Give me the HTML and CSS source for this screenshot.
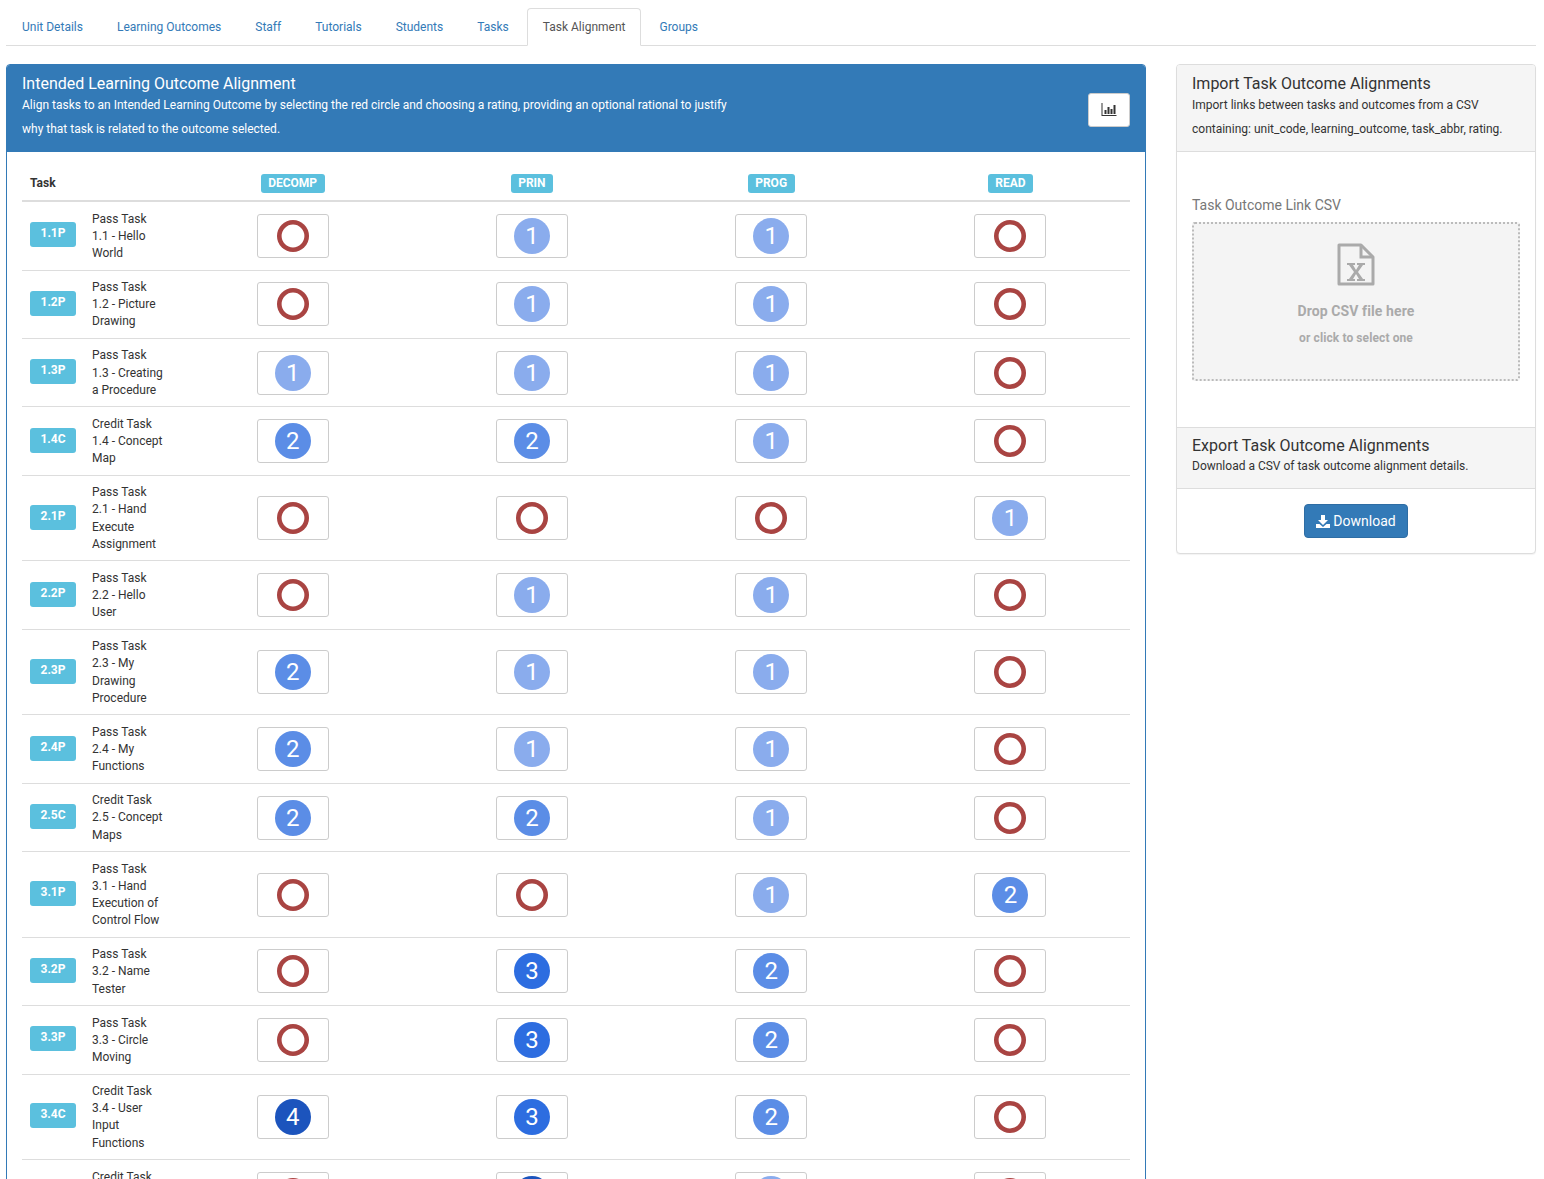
FILE: index.html
```html
<!DOCTYPE html>
<html lang="en">
<head>
  <meta charset="UTF-8">
  <title>Task Alignment</title>
  <meta name="viewport" content="width=device-width, initial-scale=1.0">
  <link rel="stylesheet" href="styles.css">
</head>
<body>

<ul class="tabs">
  <li><a href="#">Unit Details</a></li>
  <li><a href="#">Learning Outcomes</a></li>
  <li><a href="#">Staff</a></li>
  <li><a href="#">Tutorials</a></li>
  <li><a href="#">Students</a></li>
  <li><a href="#">Tasks</a></li>
  <li class="active"><a href="#">Task Alignment</a></li>
  <li><a href="#">Groups</a></li>
</ul>

<div class="layout">
  <div class="panel panel-primary">
    <div class="panel-heading heading-row">
      <div class="heading-text">
        <h3>Intended Learning Outcome Alignment</h3>
        <p>Align tasks to an Intended Learning Outcome by selecting the red circle and choosing a rating, providing an optional rational to justify why that task is related to the outcome selected.</p>
      </div>
      <button class="chart-btn" aria-label="Chart">
        <svg width="16" height="13" viewBox="0 0 15 13">
          <path fill="#333" d="M0 0h1v12h14v1H0z"/>
          <path fill="#333" d="M3 7h2v4H3zM6 4h2v7H6zM9 6h2v5H9zM12 2h2v9h-2z"/>
        </svg>
      </button>
    </div>
    <div class="panel-body">
      <table id="alignment">
        <colgroup>
          <col class="col-task">
          <col class="col-rating">
          <col class="col-rating">
          <col class="col-rating">
          <col class="col-rating">
        </colgroup>
        <thead>
          <tr>
            <th class="task-head">Task</th>
            <th><span class="label outcome">DECOMP</span></th>
            <th><span class="label outcome">PRIN</span></th>
            <th><span class="label outcome">PROG</span></th>
            <th><span class="label outcome">READ</span></th>
          </tr>
        </thead>
        <tbody></tbody>
      </table>
    </div>
  </div>

  <div class="panel panel-side">
    <div class="panel-heading">
      <h3>Import Task Outcome Alignments</h3>
      <p>Import links between tasks and outcomes from a CSV containing: unit_code, learning_outcome, task_abbr, rating.</p>
    </div>
    <div class="panel-body import-body">
      <label class="drop-label">Task Outcome Link CSV</label>
      <div class="dropzone">
        <svg class="file-icon" width="38" height="43" viewBox="0 0 38 43">
          <path fill="none" stroke="#aaa" stroke-width="3" stroke-linejoin="round" d="M2 2h22l12 12v27H2z"/>
          <path fill="none" stroke="#aaa" stroke-width="3" d="M24 2v12h12"/>
          <path fill="#aaa" d="M10 20h8v2h-2l3 5 3-5h-2v-2h8v2h-2l-5 7 5 7h2v2h-8v-2h2l-3-5-3 5h2v2h-8v-2h2l5-7-5-7h-2z"/>
        </svg>
        <div class="drop-title">Drop CSV file here</div>
        <div class="drop-sub">or click to select one</div>
      </div>
    </div>
    <div class="panel-heading heading-mid">
      <h3>Export Task Outcome Alignments</h3>
      <p>Download a CSV of task outcome alignment details.</p>
    </div>
    <div class="panel-body export-body">
      <button class="download-btn">
        <svg width="14" height="13" viewBox="0 0 14 13">
          <path fill="#fff" d="M5 0h4v5h3L7 10 2 5h3z"/>
          <path fill="#fff" d="M0 9h3.5L7 12l3.5-3H14v4H0z"/>
        </svg>
        Download
      </button>
    </div>
  </div>
</div>

<script>
// abbr, kind, name, ratings per outcome (0 = not aligned)
const tasks = [
  ["1.1P", "Pass Task", "1.1 - Hello World", [0, 1, 1, 0]],
  ["1.2P", "Pass Task", "1.2 - Picture Drawing", [0, 1, 1, 0]],
  ["1.3P", "Pass Task", "1.3 - Creating a Procedure", [1, 1, 1, 0]],
  ["1.4C", "Credit Task", "1.4 - Concept Map", [2, 2, 1, 0]],
  ["2.1P", "Pass Task", "2.1 - Hand Execute Assignment", [0, 0, 0, 1]],
  ["2.2P", "Pass Task", "2.2 - Hello User", [0, 1, 1, 0]],
  ["2.3P", "Pass Task", "2.3 - My Drawing Procedure", [2, 1, 1, 0]],
  ["2.4P", "Pass Task", "2.4 - My Functions", [2, 1, 1, 0]],
  ["2.5C", "Credit Task", "2.5 - Concept Maps", [2, 2, 1, 0]],
  ["3.1P", "Pass Task", "3.1 - Hand Execution of Control Flow", [0, 0, 1, 2]],
  ["3.2P", "Pass Task", "3.2 - Name Tester", [0, 3, 2, 0]],
  ["3.3P", "Pass Task", "3.3 - Circle Moving", [0, 3, 2, 0]],
  ["3.4C", "Credit Task", "3.4 - User Input Functions", [4, 3, 2, 0]],
  ["3.5C", "Credit Task", "3.5 - Drawing Program", [0, 4, 1, 0]],
];

const tbody = document.querySelector("#alignment tbody");

tasks.forEach(task => {
  const tr = document.createElement("tr");

  const first = document.createElement("td");
  first.className = "name-cell";
  first.innerHTML = `<div class="task-cell"><span class="label abbr">${task[0]}</span>` +
    `<span class="task-name">${task[1]}<br>${task[2]}</span></div>`;
  tr.appendChild(first);

  task[3].forEach(rating => {
    const td = document.createElement("td");
    td.className = "rating-cell";
    const mark = rating === 0
      ? '<span class="ring"></span>'
      : `<span class="dot level-${rating}">${rating}</span>`;
    td.innerHTML = `<button class="rating-btn">${mark}</button>`;
    tr.appendChild(td);
  });

  tbody.appendChild(tr);
});
</script>

</body>
</html>
```

FILE: styles.css
```css
* {
  box-sizing: border-box;
}

html, body {
  height: 100%;
  overflow: hidden;
}

body {
  font-family: Roboto, sans-serif;
  font-size: 12px;
  line-height: 1.42857;
  color: #333;
  background-color: #fff;
  margin: 0;
  padding: 8px 8px 0 6px;
}

h3 {
  margin: 0;
  font-size: 16px;
  font-weight: 400;
  line-height: 18px;
}

p {
  margin: 0;
  line-height: 24px;
}

/* Tabs */
.tabs {
  display: flex;
  list-style: none;
  margin: 0 0 18px;
  padding: 0;
  height: 38px;
  border-bottom: 1px solid #ddd;
}

.tabs li {
  margin-right: 2px;
  height: 38px;
}

.tabs a {
  display: block;
  height: 38px;
  padding: 10px 15px;
  border: 1px solid transparent;
  border-radius: 4px 4px 0 0;
  color: #337ab7;
  text-decoration: none;
}

.tabs .active a {
  color: #555;
  background-color: #fff;
  border-color: #ddd #ddd #fff;
}

/* Layout */
.layout {
  display: grid;
  grid-template-columns: 1140px 360px;
  gap: 30px;
  align-items: start;
}

.panel {
  background-color: #fff;
  border: 1px solid #ddd;
  border-radius: 4px;
  box-shadow: 0 1px 1px rgba(0, 0, 0, .05);
}

.panel-primary {
  border-color: #337ab7;
}

.panel-heading {
  padding: 10px 15px;
  background-color: #f5f5f5;
  border-bottom: 1px solid #ddd;
  color: #333;
}

.panel-primary .panel-heading {
  background-color: #337ab7;
  border-color: #337ab7;
  color: #fff;
  border-radius: 3px 3px 0 0;
}

.panel-side > .panel-heading:first-child {
  border-radius: 3px 3px 0 0;
}

.heading-row {
  display: flex;
  justify-content: space-between;
  align-items: center;
}

.heading-text {
  width: 715px;
}

.chart-btn {
  display: flex;
  align-items: center;
  justify-content: center;
  width: 42px;
  height: 34px;
  margin-top: 4px;
  background-color: #fff;
  border: 1px solid #ccc;
  border-radius: 3px;
  padding: 0 0 2px;
}

.panel-body {
  padding: 15px;
}

/* Alignment table */
#alignment {
  width: 1108px;
  table-layout: fixed;
  border-collapse: collapse;
}

.col-task {
  width: 151px;
}

.col-rating {
  width: 239.25px;
}

#alignment th {
  padding: 7px 8px 7.15px;
  text-align: center;
  border-bottom: 2px solid #ddd;
  font-weight: 700;
}

#alignment .task-head {
  text-align: left;
}

#alignment td {
  padding: 8px;
  border-bottom: 1px solid #ddd;
  vertical-align: middle;
}

#alignment .name-cell {
  padding: 8.5px 8px 7.5px;
}

.label {
  display: inline-block;
  background-color: #5bc0de;
  color: #fff;
  font-weight: 700;
  border-radius: 3px;
  text-align: center;
}

.outcome {
  padding: 1px 7.5px;
  line-height: 17px;
  vertical-align: top;
}

.abbr {
  flex: none;
  width: 46px;
  height: 25px;
  line-height: 23px;
  margin: 0 16px 3px 0;
}

.task-cell {
  display: flex;
  align-items: center;
  width: 170px;
}

.task-name {
  width: 73px;
}

.rating-cell {
  text-align: center;
}

.rating-btn {
  display: inline-flex;
  align-items: center;
  justify-content: center;
  width: 72px;
  height: 44px;
  padding: 0;
  background-color: #fff;
  border: 1px solid #ccc;
  border-radius: 3px;
  vertical-align: middle;
}

.ring {
  width: 32px;
  height: 32px;
  border-radius: 50%;
  box-shadow: inset 0 0 0 4.6px #a94442;
}

.dot {
  width: 36px;
  height: 36px;
  border-radius: 50%;
  color: #fff;
  font-family: Roboto, sans-serif;
  font-size: 24px;
  font-weight: 400;
  line-height: 37px;
  text-align: center;
}

.level-1 {
  background-color: #8aaced;
}

.level-2 {
  background-color: #5b8de6;
}

.level-3 {
  background-color: #2d6de0;
}

.level-4 {
  background-color: #1c54bd;
}

/* Side panel */
.import-body {
  height: 275px;
  padding-top: 42.5px;
}

.drop-label {
  display: block;
  font-size: 14px;
  line-height: 20px;
  color: #777;
  margin-bottom: 7.5px;
}

.dropzone {
  display: flex;
  flex-direction: column;
  align-items: center;
  height: 159px;
  padding-top: 19px;
  background-color: #f4f4f4;
  border: 2px dotted #bbb;
  border-radius: 3px;
  color: #aaa;
  font-weight: 700;
  letter-spacing: .1px;
}

.file-icon {
  margin-bottom: 15px;
}

.drop-title {
  font-size: 14px;
  line-height: 20px;
  margin-bottom: 8px;
}

.drop-sub {
  font-size: 12px;
  line-height: 18px;
}

.panel-side .heading-mid {
  padding: 9px 15px 11px;
  border-top: 1px solid #ddd;
}

.heading-mid p {
  line-height: 22px;
}

.export-body {
  display: flex;
  justify-content: center;
}

.download-btn {
  display: inline-flex;
  align-items: center;
  gap: 3px;
  height: 34px;
  padding: 0 11px;
  font-family: Roboto, sans-serif;
  font-size: 14px;
  color: #fff;
  background-color: #337ab7;
  border: 1px solid #2e6da4;
  border-radius: 4px;
}
```
